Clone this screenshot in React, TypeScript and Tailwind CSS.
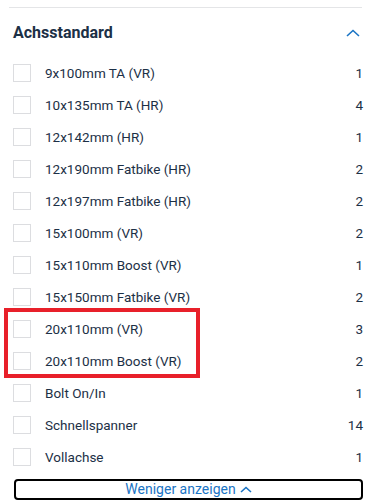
import React from 'react'

const options = [
  { label: '9x100mm TA (VR)', count: 1 },
  { label: '10x135mm TA (HR)', count: 4 },
  { label: '12x142mm (HR)', count: 1 },
  { label: '12x190mm Fatbike (HR)', count: 2 },
  { label: '12x197mm Fatbike (HR)', count: 2 },
  { label: '15x100mm (VR)', count: 2 },
  { label: '15x110mm Boost (VR)', count: 1 },
  { label: '15x150mm Fatbike (VR)', count: 2 },
  { label: '20x110mm (VR)', count: 3 },
  { label: '20x110mm Boost (VR)', count: 2 },
  { label: 'Bolt On/In', count: 1 },
  { label: 'Schnellspanner', count: 14 },
  { label: 'Vollachse', count: 1 },
]

const Row = ({ label, count }: { label: string; count: number }) => (
  <label className="flex h-8 items-center">
    <span className="h-[18px] w-[18px] shrink-0 border border-[#dcdde0] bg-white" />
    <span className="ml-[14px] flex-1 text-[13.5px] text-[#1c3046]">{label}</span>
    <span className="text-[13.5px] text-[#1c3046]">{count}</span>
  </label>
)

const App = () => {
  return (
    <div className="min-h-[503px] w-[366px] bg-white font-['Roboto',sans-serif]">
      <div className="ml-[9px] mr-1 pt-[7px]">
        <div className="h-px bg-[#e4e5e7]" />
      </div>

      <div className="px-[13px] pr-[3px]">
        <div className="flex h-[50px] items-center justify-between pr-[2px]">
          <h2 className="text-[16px] font-bold text-[#1c3046]">Achsstandard</h2>
          <svg width="14" height="8" viewBox="0 0 14 8" fill="none" className="mr-[1px]">
            <path d="M1 7 L7 1.5 L13 7" stroke="#1a74c4" strokeWidth="1.6" />
          </svg>
        </div>

        <div className="relative mt-[-1px]">
          {options.map((o) => (
            <Row key={o.label} {...o} />
          ))}
          {/* markierung */}
          <div className="pointer-events-none absolute left-[-9px] top-[251px] h-[70px] w-[196px] border-4 border-[#e8202a]" />
        </div>

        <button className="mt-[6px] ml-px flex h-[21px] w-[349px] items-center justify-center gap-1 rounded border-2 border-black text-[14px] text-[#1a74c4]">
          Weniger anzeigen
          <svg width="12" height="7" viewBox="0 0 12 7" fill="none">
            <path d="M1 6 L6 1.5 L11 6" stroke="#1a74c4" strokeWidth="1.6" />
          </svg>
        </button>
      </div>
    </div>
  )
}

export default App
